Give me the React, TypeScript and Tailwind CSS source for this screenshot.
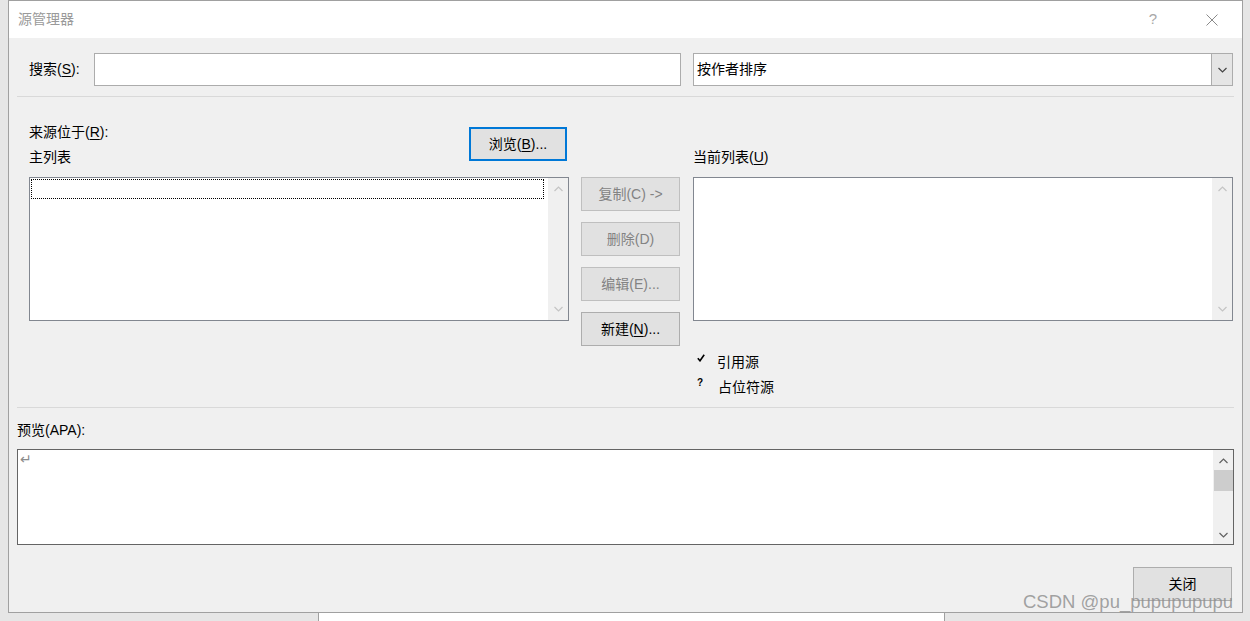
import React from 'react'

const U = ({ children }: { children: React.ReactNode }) => <span className="underline underline-offset-2">{children}</span>

const ChevUp = ({ color }: { color: string }) => (
    <svg width="9" height="6" viewBox="0 0 9 6">
        <path d="M0.5 5 L4.5 1 L8.5 5" fill="none" stroke={color} strokeWidth="1.2" />
    </svg>
)

const ChevDown = ({ color }: { color: string }) => (
    <svg width="9" height="6" viewBox="0 0 9 6">
        <path d="M0.5 1 L4.5 5 L8.5 1" fill="none" stroke={color} strokeWidth="1.2" />
    </svg>
)

const ListBox = ({ focus }: { focus?: boolean }) => (
    <div className="h-[144px] w-full border border-[#828790] bg-white flex">
        <div className="flex-1 p-[1px] pr-[4px]">
            {focus && <div className="h-[20px] border border-dotted border-black" />}
        </div>
        <div className="w-[20px] bg-[#f0f0f0] flex flex-col items-center justify-between py-[8px]">
            <ChevUp color="#c4c4c4" />
            <ChevDown color="#c4c4c4" />
        </div>
    </div>
)

const SideButton = ({ children, disabled }: { children: React.ReactNode; disabled?: boolean }) => (
    <button
        className={
            disabled
                ? 'h-[34px] w-[99px] bg-[#e1e1e1] border border-[#bfbfbf] text-[#838383] text-[14px]'
                : 'h-[34px] w-[99px] bg-[#e1e1e1] border border-[#adadad] text-black text-[14px]'
        }
    >
        {children}
    </button>
)

const App = () => {
    return (
        <div
            className="relative w-[1250px] h-[621px] bg-[#e6e6e6] overflow-hidden flex flex-col text-[14px] text-black"
            style={{ fontFamily: '"Liberation Sans", "Noto Sans CJK SC", sans-serif' }}
        >
            <div className="ml-[8px] w-[1235px] h-[613px] shrink-0 border border-[#a0a0a0] bg-[#f0f0f0] flex flex-col">
                {/* title bar */}
                <div className="h-[37px] bg-white flex items-center pl-[9px] shrink-0">
                    <span className="text-[#9a9a9a] text-[14px]">源管理器</span>
                    <span className="ml-auto text-[#a8a8a8] text-[15px]">?</span>
                    <svg className="ml-[49px] mr-[24px]" width="12" height="12" viewBox="0 0 12 12">
                        <path d="M0.5 0.5 L11.5 11.5 M11.5 0.5 L0.5 11.5" stroke="#8a8a8a" strokeWidth="1" />
                    </svg>
                </div>

                <div className="px-[8px] flex flex-col">
                    {/* search row */}
                    <div className="mt-[15px] h-[33px] flex pl-[12px]">
                        <div className="w-[65px] flex items-center">
                            搜索(<U>S</U>):
                        </div>
                        <div className="w-[587px] h-[33px] bg-white border border-[#acacac]" />
                        <div className="ml-[12px] w-[540px] h-[33px] bg-white border border-[#acacac] flex">
                            <div className="flex-1 flex items-center pl-[3px]">按作者排序</div>
                            <div className="w-[21px] bg-[#e5e5e5] border-l border-[#acacac] flex items-center justify-center">
                                <ChevDown color="#444" />
                            </div>
                        </div>
                    </div>

                    <div className="mt-[10px] h-px bg-[#d9d9d9]" />

                    {/* lists */}
                    <div className="h-[310px] flex pl-[12px]">
                        <div className="w-[540px] flex flex-col">
                            <div className="flex justify-between pt-[25px]">
                                <div className="flex flex-col gap-[5px] leading-[20px]">
                                    <span>来源位于(<U>R</U>):</span>
                                    <span>主列表</span>
                                </div>
                                <button className="mt-[5px] mr-[2px] h-[34px] w-[98px] bg-[#e1e1e1] border-2 border-[#0078d7] text-[14px]">
                                    浏览(<U>B</U>)...
                                </button>
                            </div>
                            <div className="mt-[10px]">
                                <ListBox focus />
                            </div>
                        </div>

                        <div className="ml-[12px] w-[99px] pt-[80px] flex flex-col gap-[11px]">
                            <SideButton disabled>复制(C) -&gt;</SideButton>
                            <SideButton disabled>删除(D)</SideButton>
                            <SideButton disabled>编辑(E)...</SideButton>
                            <SideButton>
                                新建(<U>N</U>)...
                            </SideButton>
                        </div>

                        <div className="ml-[13px] w-[540px] flex flex-col">
                            <div className="pt-[50px] leading-[20px]">
                                当前列表(<U>U</U>)
                            </div>
                            <div className="mt-[10px]">
                                <ListBox />
                            </div>
                            <div className="mt-[31px] flex leading-[20px]">
                                <div className="w-[24px] pl-[4px] pt-[2px]">
                                    <svg width="8" height="8" viewBox="0 0 8 8">
                                        <path d="M0.8 4.2 L3 6.8 L7.2 0.8" fill="none" stroke="#000" strokeWidth="1.6" />
                                    </svg>
                                </div>
                                <span>引用源</span>
                            </div>
                            <div className="mt-[5px] flex leading-[20px]">
                                <div className="w-[25px] pl-[4px] text-[10px] font-bold leading-[12px]">?</div>
                                <span>占位符源</span>
                            </div>
                        </div>
                    </div>

                    <div className="h-px bg-[#d9d9d9]" />

                    {/* preview */}
                    <div className="mt-[12px] leading-[20px]">预览(APA):</div>
                    <div className="mt-[9px] h-[96px] bg-white border border-[#646464] flex">
                        <div className="flex-1 pl-[2px] pt-[1px] text-[#8c8c8c] text-[14px] leading-[16px]">↵</div>
                        <div className="w-[20px] bg-[#f0f0f0] flex flex-col items-center pt-[8px] pb-[6px]">
                            <ChevUp color="#606060" />
                            <div className="mt-[6px] w-[19px] h-[21px] bg-[#cdcdcd]" />
                            <div className="flex-1" />
                            <ChevDown color="#606060" />
                        </div>
                    </div>

                    <div className="mt-[22px] flex justify-end pr-[2px]">
                        <button className="h-[34px] w-[99px] bg-[#e1e1e1] border border-[#adadad] text-[14px]">关闭</button>
                    </div>
                </div>
            </div>

            {/* window behind, bottom edge */}
            <div className="h-[8px] flex">
                <div className="ml-[318px] w-[627px] h-full bg-white border-x border-[#a0a0a0]" />
            </div>

            {/* watermark */}
            <div className="absolute left-[1023px] top-[590px] text-[18.5px] leading-[24px] text-[#8c8c8c]/80 whitespace-nowrap">
                CSDN @pu_pupupupupu
            </div>
        </div>
    )
}

export default App
